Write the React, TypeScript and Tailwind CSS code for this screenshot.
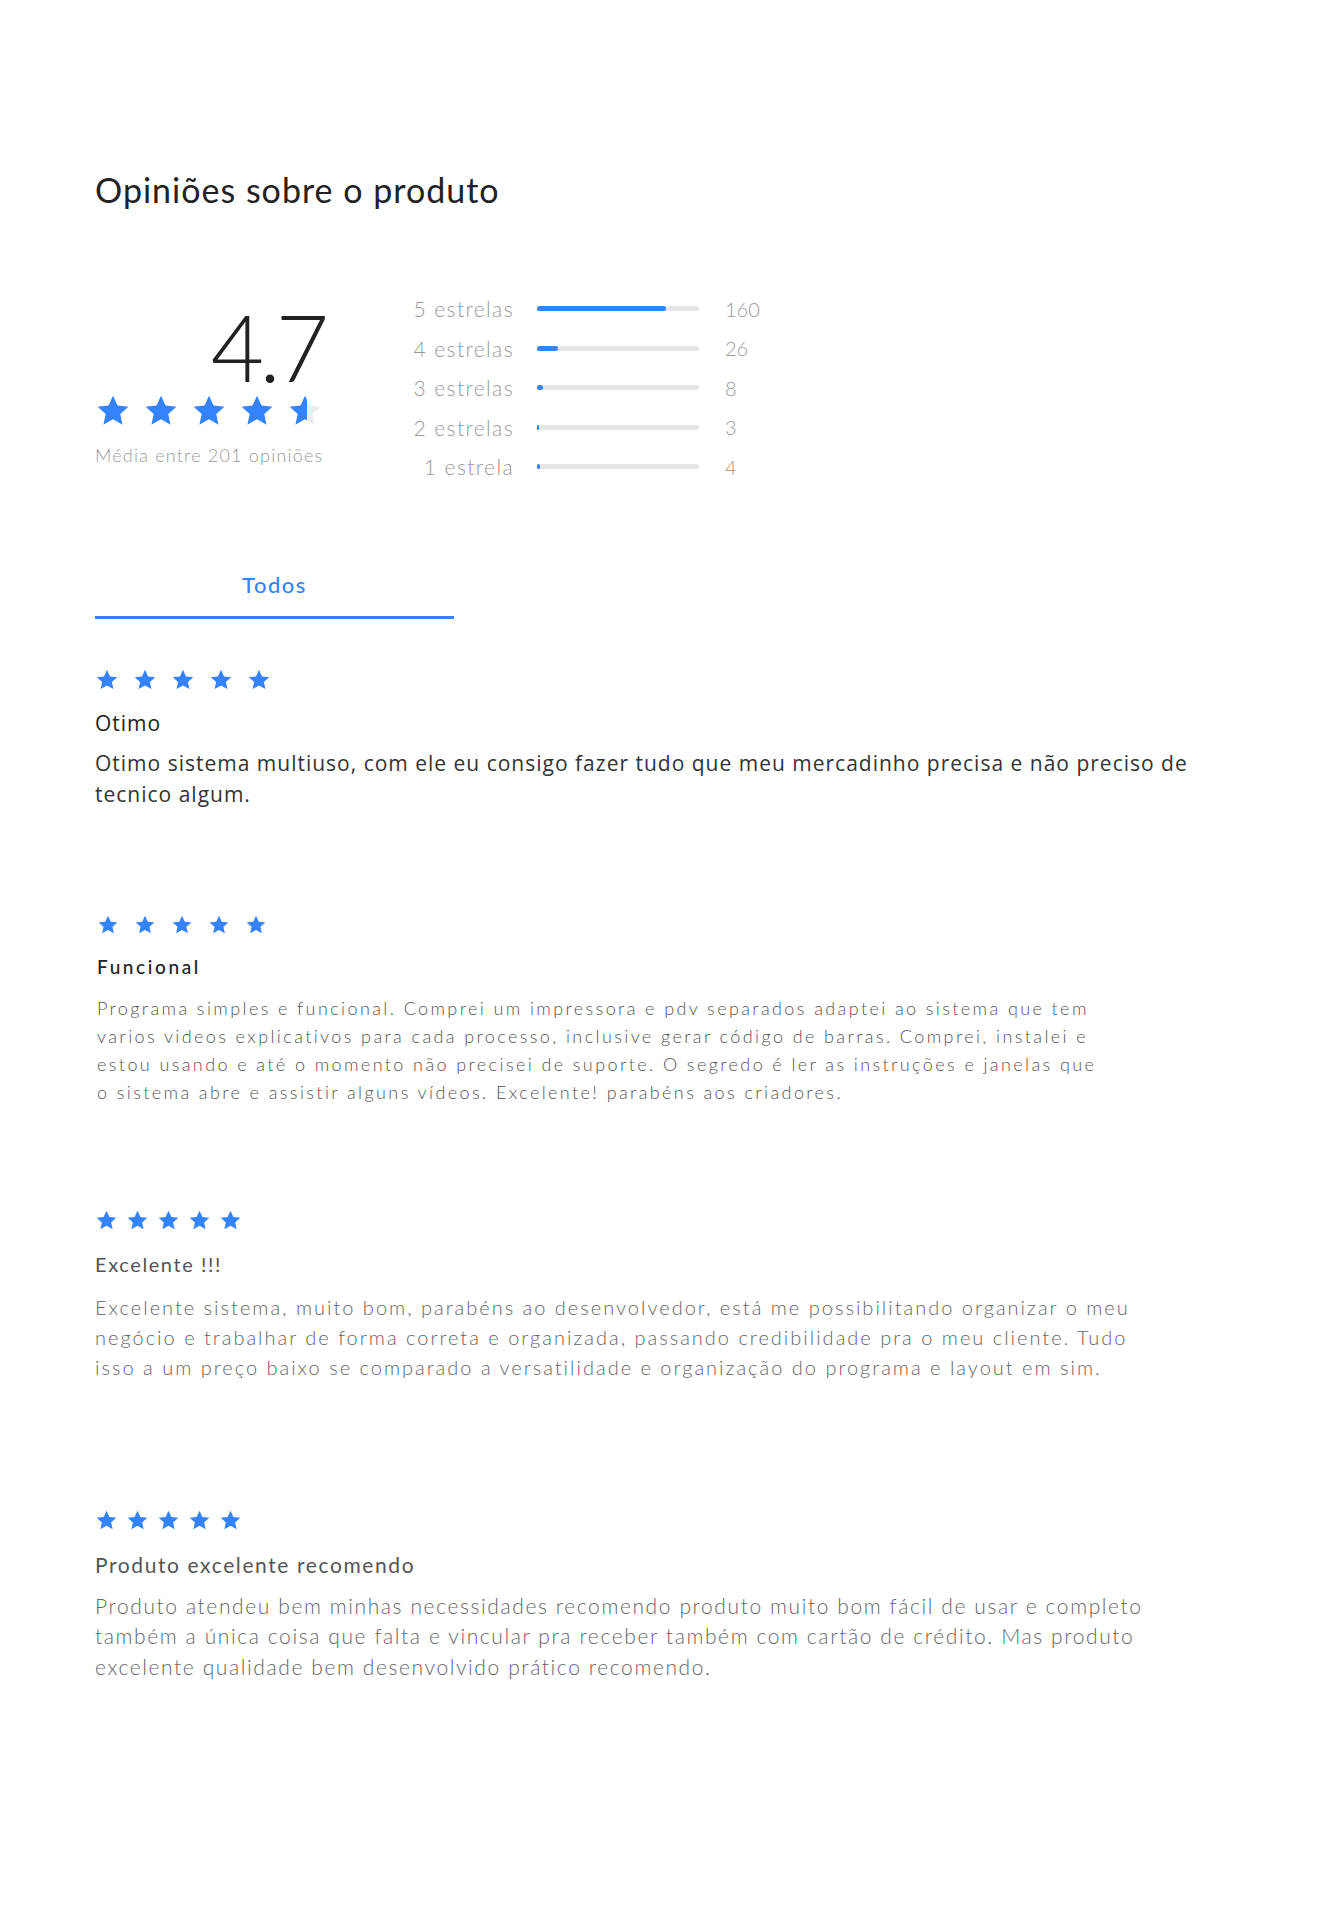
import { useId } from "react"

const BLUE = "#3483fa"
const STAR_PATH = "M12 1.8l3.05 6.6 7.2.75-5.4 4.85 1.55 7.1L12 17.45 5.6 21.1l1.55-7.1-5.4-4.85 7.2-.75z"

function Star({ size, fill = 1 }: { size: number; fill?: number }) {
  const id = useId()
  return (
    <svg width={size} height={size} viewBox="0 0 24 24" className="shrink-0">
      <defs>
        <linearGradient id={id} x1="0" x2="1" y1="0" y2="0">
          <stop offset={fill} stopColor={BLUE} />
          <stop offset={fill} stopColor="#ececec" />
        </linearGradient>
      </defs>
      <path d={STAR_PATH} fill={fill >= 1 ? BLUE : `url(#${id})`} />
    </svg>
  )
}

function Stars({ size, gap, rating = 5 }: { size: number; gap: string; rating?: number }) {
  return (
    <div className={`flex items-center ${gap}`}>
      {[0, 1, 2, 3, 4].map((i) => (
        <Star key={i} size={size} fill={Math.max(0, Math.min(1, rating - i))} />
      ))}
    </div>
  )
}

const rows = [
  { label: "5 estrelas", count: 160 },
  { label: "4 estrelas", count: 26 },
  { label: "3 estrelas", count: 8 },
  { label: "2 estrelas", count: 3 },
  { label: "1 estrela", count: 4 },
]

export default function App() {
  const total = 201

  return (
    <div className="min-h-[1916px] w-full bg-white font-['Lato',sans-serif] text-[#333]">
      <div className="pl-[95px] pt-[170px]">
        {/* Title */}
        <h2 className="text-[34px] leading-[40px] font-normal tracking-[1px] text-[#222]">Opiniões sobre o produto</h2>

        {/* Summary */}
        <div className="mt-[79px] flex items-start">
          <div className="mt-[12px] flex w-[230px] flex-col">
            <div className="text-right text-[92px] font-light leading-none tracking-[-5px] text-[#222] pr-[1px]">4.7</div>
            <Stars size={36} gap="gap-[12px]" rating={4.55} />
            <p className="mt-[16px] text-[18px] leading-[20px] font-light tracking-[1.2px] whitespace-nowrap text-[#999]">
              Média entre 201 opiniões
            </p>
          </div>

          <div className="ml-[75px] flex flex-col">
            {rows.map((r) => (
              <div key={r.label} className="flex h-[39.5px] items-center">
                <span className="w-[114px] text-right text-[21px] font-light tracking-[1.4px] text-[#999]">{r.label}</span>
                <div className="ml-[23px] h-[5px] w-[162px] rounded-full bg-[#e6e6e6]">
                  <div
                    className="h-full rounded-full bg-[#3483fa]"
                    style={{ width: `${(r.count / total) * 100}%`, minWidth: 2 }}
                  />
                </div>
                <span className="ml-[26px] text-[20px] font-light text-[#999]">{r.count}</span>
              </div>
            ))}
          </div>
        </div>

        {/* Tabs */}
        <div className="mt-[86px] w-[359px] border-b-[3px] border-[#3483fa] pb-[19px] text-center text-[22px] leading-[24px] font-medium tracking-[1.5px] text-[#3483fa]">
          Todos
        </div>

        {/* Review 1 */}
        <div className="mt-[49px] font-['Open_Sans',sans-serif]">
          <Stars size={24} gap="gap-[14px]" />
          <h3 className="mt-[19px] text-[21px] leading-[24px] font-medium tracking-[1px] text-[#222]">Otimo</h3>
          <p className="mt-[13px] w-[1130px] text-[21px] leading-[31px] tracking-[1px] text-[#333]">
            Otimo sistema multiuso, com ele eu consigo fazer tudo que meu mercadinho precisa e não preciso de tecnico algum.
          </p>
        </div>

        {/* Review 2 */}
        <div className="mt-[104px] pl-[2px]">
          <Stars size={22} gap="gap-[15px]" />
          <h3 className="mt-[19px] text-[19px] leading-[24px] font-medium tracking-[2.6px] text-[#222]">Funcional</h3>
          <p className="mt-[15px] w-[1008px] text-[18px] leading-[28.3px] font-light tracking-[2.4px] text-[#555]">
            Programa simples e funcional. Comprei um impressora e pdv separados adaptei ao sistema que tem varios videos
            explicativos para cada processo, inclusive gerar código de barras. Comprei, instalei e estou usando e até o
            momento não precisei de suporte. O segredo é ler as instruções e janelas que o sistema abre e assistir alguns
            vídeos. Excelente! parabéns aos criadores.
          </p>
        </div>

        {/* Review 3 */}
        <div className="mt-[102px]">
          <Stars size={23} gap="gap-[8px]" />
          <h3 className="mt-[20px] text-[20px] leading-[24px] font-normal tracking-[1.6px] text-[#555]">Excelente !!!</h3>
          <p className="mt-[16px] w-[1065px] text-[20px] leading-[30px] font-light tracking-[2px] text-[#666]">
            Excelente sistema, muito bom, parabéns ao desenvolvedor, está me possibilitando organizar o meu negócio e
            trabalhar de forma correta e organizada, passando credibilidade pra o meu cliente. Tudo isso a um preço baixo
            se comparado a versatilidade e organização do programa e layout em sim.
          </p>
        </div>

        {/* Review 4 */}
        <div className="mt-[127px]">
          <Stars size={23} gap="gap-[8px]" />
          <h3 className="mt-[21px] text-[21px] leading-[24px] font-normal tracking-[1.6px] text-[#555]">Produto excelente recomendo</h3>
          <p className="mt-[14px] w-[1090px] text-[21px] leading-[30.5px] font-light tracking-[1.6px] text-[#666]">
            Produto atendeu bem minhas necessidades recomendo produto muito bom fácil de usar e completo também a única
            coisa que falta e vincular pra receber também com cartão de crédito. Mas produto excelente qualidade bem
            desenvolvido prático recomendo.
          </p>
        </div>
      </div>
    </div>
  )
}
